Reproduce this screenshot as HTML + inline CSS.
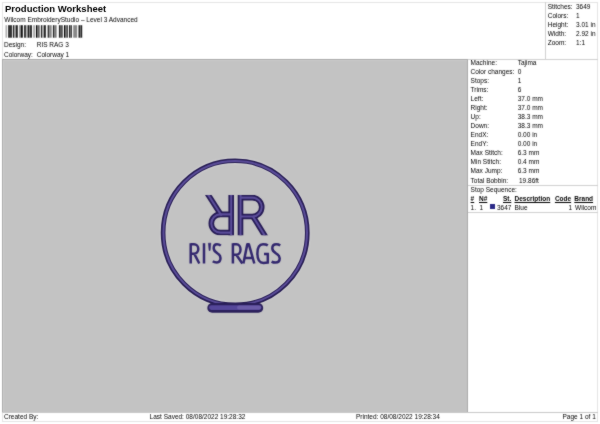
<!DOCTYPE html>
<html><head><meta charset="utf-8">
<style>
html,body{margin:0;padding:0;background:#fff;width:600px;height:424px;overflow:hidden;position:relative}
body{font-family:"Liberation Sans",sans-serif;color:#000}
.a{position:absolute;white-space:nowrap;line-height:1}
.s{font-size:6.5px}
#frame{position:absolute;left:2px;top:2px;width:596px;height:420px;border:1px solid #e4e4e4;box-sizing:border-box}
</style></head><body><div id="wrap" style="position:absolute;left:0;top:0;width:600px;height:424px;filter:url(#fb)">
<div id="frame"></div>

<div class="a s" style="left:4.3px;top:16.75px">Wilcom EmbroideryStudio – Level 3 Advanced</div>
<svg class="a" style="left:0;top:0" width="600" height="424">
<g id="barcode"><rect x="5.6" y="25.2" width="1.2" height="12.5" fill="#999"/><rect x="8.07" y="25.2" width="3.89" height="12.5" fill="#333"/><rect x="12.85" y="25.2" width="1.42" height="12.5" fill="#222"/><rect x="14.27" y="25.2" width="1.59" height="12.5" fill="#999"/><rect x="15.86" y="25.2" width="1.94" height="12.5" fill="#222"/><rect x="19.04" y="25.2" width="1.76" height="12.5" fill="#999"/><rect x="20.8" y="25.2" width="2.0" height="12.5" fill="#111"/><rect x="24.1" y="25.2" width="1.8" height="12.5" fill="#222"/><rect x="25.9" y="25.2" width="1.76" height="12.5" fill="#bbb"/><rect x="27.66" y="25.2" width="1.44" height="12.5" fill="#1a1a1a"/><rect x="29.1" y="25.2" width="1.0" height="12.5" fill="#777"/><rect x="30.1" y="25.2" width="1.8" height="12.5" fill="#222"/><rect x="33.15" y="25.2" width="1.95" height="12.5" fill="#aaa"/><rect x="36" y="25.2" width="1.2" height="12.5" fill="#000"/><rect x="37.2" y="25.2" width="2.5" height="12.5" fill="#666"/><rect x="40.9" y="25.2" width="1.4" height="12.5" fill="#222"/><rect x="42.3" y="25.2" width="1.6" height="12.5" fill="#aaa"/><rect x="43.9" y="25.2" width="1.94" height="12.5" fill="#222"/><rect x="47.6" y="25.2" width="1.6" height="12.5" fill="#333"/><rect x="49.2" y="25.2" width="2.5" height="12.5" fill="#888"/><rect x="52.9" y="25.2" width="1.3" height="12.5" fill="#222"/><rect x="54.2" y="25.2" width="2.4" height="12.5" fill="#777"/><rect x="58.9" y="25.2" width="1.2" height="12.5" fill="#222"/><rect x="60.1" y="25.2" width="2.7" height="12.5" fill="#555"/><rect x="64" y="25.2" width="1.1" height="12.5" fill="#000"/><rect x="65.1" y="25.2" width="1.75" height="12.5" fill="#666"/><rect x="66.85" y="25.2" width="1.05" height="12.5" fill="#333"/><rect x="69" y="25.2" width="1" height="12.5" fill="#222"/><rect x="70" y="25.2" width="0.7" height="12.5" fill="#777"/><rect x="70.7" y="25.2" width="1.1" height="12.5" fill="#111"/><rect x="73.2" y="25.2" width="3.9" height="12.5" fill="#888"/><rect x="78.5" y="25.2" width="1.8" height="12.5" fill="#222"/><rect x="80.3" y="25.2" width="0.7" height="12.5" fill="#555"/><rect x="81" y="25.2" width="1.2" height="12.5" fill="#222"/></g>
</svg>
<div class="a s" style="left:4px;top:42.3px">Design:</div>
<div class="a s" style="left:36.7px;top:42.3px">RIS RAG 3</div>
<div class="a s" style="left:4px;top:51.7px">Colorway:</div>
<div class="a s" style="left:36.7px;top:51.7px">Colorway 1</div>

<!-- top right box -->
<div class="a" style="left:545px;top:2px;width:1px;height:57px;background:#d0d0d0"></div>
<div class="a s" style="left:547.7px;top:4px">Stitches:</div><div class="a s" style="left:576px;top:4px">3649</div>
<div class="a s" style="left:547.7px;top:13px">Colors:</div><div class="a s" style="left:576px;top:13px">1</div>
<div class="a s" style="left:547.7px;top:22px">Height:</div><div class="a s" style="left:576px;top:22px">3.01 in</div>
<div class="a s" style="left:547.7px;top:31px">Width:</div><div class="a s" style="left:576px;top:31px">2.92 in</div>
<div class="a s" style="left:547.7px;top:40px">Zoom:</div><div class="a s" style="left:576px;top:40px">1:1</div>

<!-- gray canvas -->
<div class="a" style="left:2px;top:59px;width:466px;height:353.5px;background:#c3c3c3;border:1px solid #aaa;box-sizing:border-box;box-shadow:inset 1px 1px 0 #cbcbcb"></div>
<div class="a" style="left:468px;top:58.5px;width:130px;height:1px;background:#d0d0d0"></div>

<!-- machine panel -->
<div class="a s" style="left:470.6px;top:60.00px">Machine:</div><div class="a s" style="left:517.7px;top:60.00px">Tajima</div>
<div class="a s" style="left:470.6px;top:69.04px">Color changes:</div><div class="a s" style="left:517.7px;top:69.04px">0</div>
<div class="a s" style="left:470.6px;top:78.08px">Stops:</div><div class="a s" style="left:517.7px;top:78.08px">1</div>
<div class="a s" style="left:470.6px;top:87.12px">Trims:</div><div class="a s" style="left:517.7px;top:87.12px">6</div>
<div class="a s" style="left:470.6px;top:96.16px">Left:</div><div class="a s" style="left:517.7px;top:96.16px">37.0 mm</div>
<div class="a s" style="left:470.6px;top:105.20px">Right:</div><div class="a s" style="left:517.7px;top:105.20px">37.0 mm</div>
<div class="a s" style="left:470.6px;top:114.24px">Up:</div><div class="a s" style="left:517.7px;top:114.24px">38.3 mm</div>
<div class="a s" style="left:470.6px;top:123.28px">Down:</div><div class="a s" style="left:517.7px;top:123.28px">38.3 mm</div>
<div class="a s" style="left:470.6px;top:132.32px">EndX:</div><div class="a s" style="left:517.7px;top:132.32px">0.00 in</div>
<div class="a s" style="left:470.6px;top:141.36px">EndY:</div><div class="a s" style="left:517.7px;top:141.36px">0.00 in</div>
<div class="a s" style="left:470.6px;top:150.40px">Max Stitch:</div><div class="a s" style="left:517.7px;top:150.40px">6.3 mm</div>
<div class="a s" style="left:470.6px;top:159.44px">Min Stitch:</div><div class="a s" style="left:517.7px;top:159.44px">0.4 mm</div>
<div class="a s" style="left:470.6px;top:168.48px">Max Jump:</div><div class="a s" style="left:517.7px;top:168.48px">6.3 mm</div>
<div class="a s" style="left:470.6px;top:177.52px">Total Bobbin:</div><div class="a s" style="left:519px;top:177.52px">19.86ft</div>
<div class="a" style="left:468px;top:185px;width:130px;height:1px;background:#d0d0d0"></div>
<div class="a s" style="left:470.6px;top:187px">Stop Sequence:</div>
<div class="a s" style="left:470.6px;top:196px;font-weight:bold;text-decoration:underline">#</div>
<div class="a s" style="left:479px;top:196px;font-weight:bold;text-decoration:underline">N#</div>
<div class="a s" style="left:503px;top:196px;font-weight:bold;text-decoration:underline">St.</div>
<div class="a s" style="left:514.5px;top:196px;font-weight:bold;text-decoration:underline">Description</div>
<div class="a s" style="left:554.9px;top:196px;font-weight:bold;text-decoration:underline">Code</div>
<div class="a s" style="left:574.3px;top:196px;font-weight:bold;text-decoration:underline">Brand</div>
<div class="a s" style="left:470.6px;top:204.5px">1.</div>
<div class="a s" style="left:479.5px;top:204.5px">1</div>
<div class="a" style="left:489.7px;top:204.2px;width:5.3px;height:5px;background:#2b2a88"></div>
<div class="a s" style="left:497px;top:204.5px">3647</div>
<div class="a s" style="left:514.5px;top:204.5px">Blue</div>
<div class="a s" style="left:568.5px;top:204.5px">1</div>
<div class="a s" style="left:575px;top:204.5px">Wilcom</div>
<div class="a" style="left:468px;top:212px;width:130px;height:1px;background:#d0d0d0"></div>

<!-- footer -->
<div class="a" style="left:2px;top:412px;width:596px;height:1px;background:#c8c8c8"></div>
<div class="a s" style="left:4px;top:414.2px">Created By:</div>
<div class="a s" style="left:149.6px;top:414.2px">Last Saved: 08/08/2022 19:28:32</div>
<div class="a s" style="left:356px;top:414.2px">Printed: 08/08/2022 19:28:34</div>
<div class="a s" style="left:562.5px;top:414.2px">Page 1 of 1</div>

<!-- logo -->
<svg class="a" style="left:0;top:0" width="600" height="424">
<defs>
<clipPath id="cl"><rect x="190" y="195" width="90" height="40.2"/></clipPath>
<g id="R1">
<path d="M240.5,190 V240"/>
<path d="M240.5,197.6 H252.3 A9.45,9.45 0 0 1 252.3,216.5 H240.5"/>
<path d="M252.7,216 L266.7,238.7"/>
</g>
<g id="R2">
<path d="M231.2,190 V240"/>
<path d="M231.2,232.6 H220.4 A9.1,9.1 0 0 1 220.4,214.4 H231.2"/>
<path d="M221.6,215.8 L206.4,192"/>
</g>
</defs>
<g fill="none">
<circle cx="235.2" cy="232.85" r="72.1" stroke="#d2d2d2" stroke-width="6.8"/>
<circle cx="235.2" cy="232.85" r="72.1" stroke="#22184f" stroke-width="4.7"/>
<circle cx="235.2" cy="232.85" r="71.8" stroke="#5c4e9b" stroke-width="2"/>
</g>
<rect x="207.3" y="303" width="55.9" height="9.8" rx="4.9" fill="#2a1f5a"/>
<rect x="209" y="305.3" width="52.5" height="4.6" rx="2.3" fill="#55479a"/><rect x="237" y="305.6" width="24" height="4" rx="2" fill="#7062ab" opacity="0.8"/>
<g><g clip-path="url(#cl)" fill="none">
<g stroke="#251a55" stroke-width="5.6">
<use href="#R1"/>
<use href="#R2"/>
</g>
<g stroke="#5b4d9a" stroke-width="2.1">
<use href="#R1"/>
<use href="#R2"/>
</g>
</g>
</g>
<g fill="none" stroke="#32276e" stroke-width="2.5">
<path d="M190.7,243.2 V263.5 M190.7,244.3 H194 A4.3,4.7 0 0 1 194,253.7 H190.7 M194.2,253.7 L199.3,263.5"/>
<path d="M204,243.2 V263.5"/>
<path d="M208.4,243.2 L210.8,243.2 L210.1,250.5 L209.1,250.5 Z" fill="#32276e" stroke-width="0.6"/>
<path d="M220.8,245.6 C219.5,244.5 218.5,244.3 217,244.3 C214.5,244.3 213.7,246.5 213.7,248.3 C213.7,251 216,252.5 217.5,253.3 C219.5,254.3 220.5,255.8 220.5,258 C220.5,260.8 219,262.4 216.8,262.4 C215.2,262.4 213.8,262 212.8,261.2"/>
<path d="M232.9,243.2 V263.5 M232.9,244.2 H236.5 A4,5.25 0 0 1 236.5,254.7 H232.9 M236.3,254.7 L242.3,263.5"/>
<path d="M243.4,263.5 L247.3,244.3 H248.9 L254.3,263.5 M245,258 H252.6" stroke-linejoin="round"/>
<path d="M267.8,245.4 C266.5,244.5 265,244.2 263,244.2 C259,244.2 257.4,248.5 257.4,253.5 C257.4,259.5 259.5,262.9 263.5,262.9 C265,262.9 266.7,262.7 267.8,262.5 V253.2 M264,254.1 H268.9"/>
<path d="M280.2,245.4 C279,244.5 278,244.2 276.3,244.2 C273.5,244.2 272.3,246 272.3,248.3 C272.3,251 274.5,252.5 276,253.3 C278.5,254.5 279.7,255.8 279.7,258.3 C279.7,261.2 278,262.6 275.6,262.6 C274,262.6 272.6,262.2 271.6,261.6"/>
</g>
</svg>
</div><div class="a" style="left:5px;top:3.5px;font-size:9.5px;font-weight:bold;filter:url(#fb2)">Production Worksheet</div><svg width=0 height=0 style="position:absolute"><filter id="fb" x="0" y="0" width="100%" height="100%" color-interpolation-filters="sRGB"><feConvolveMatrix order="3" kernelMatrix="1 2 1 2 20 2 1 2 1" divisor="32" edgeMode="duplicate"/></filter><filter id="fb2" x="-10%" y="-30%" width="120%" height="160%" color-interpolation-filters="sRGB"><feConvolveMatrix order="3" kernelMatrix="1 2 1 2 40 2 1 2 1" divisor="52" edgeMode="none"/></filter></svg></body></html>
